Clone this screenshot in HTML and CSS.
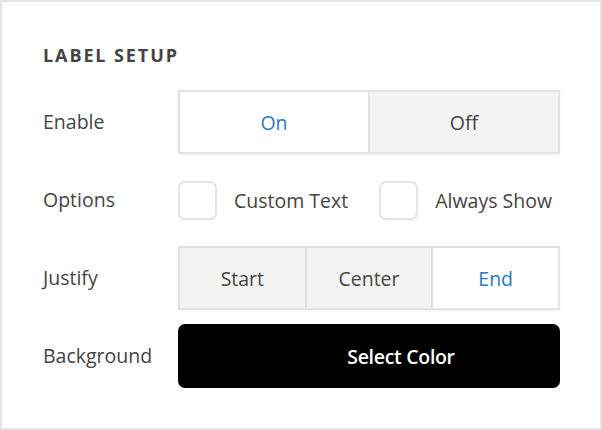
FILE: index.html
```html
<!DOCTYPE html>
<html>
<head>
<meta charset="utf-8">
<link rel="stylesheet" href="styles.css">
</head>
<body>
<div class="panel">
  <h2 class="title">LABEL SETUP</h2>
  <div class="form">
    <div class="label">Enable</div>
    <div class="seg seg-2">
      <div class="seg-item active">On</div>
      <div class="seg-item">Off</div>
    </div>

    <div class="label">Options</div>
    <div class="options">
      <label class="check"><span class="box"></span><span class="check-text">Custom Text</span></label>
      <label class="check"><span class="box"></span><span class="check-text">Always Show</span></label>
    </div>

    <div class="label">Justify</div>
    <div class="seg seg-3">
      <div class="seg-item">Start</div>
      <div class="seg-item">Center</div>
      <div class="seg-item active">End</div>
    </div>

    <div class="label">Background</div>
    <div class="color-btn">Select Color</div>
  </div>
</div>
</body>
</html>
```

FILE: styles.css
```css
html, body {
  margin: 0;
  padding: 0;
  background: #ffffff;
}

.panel {
  box-sizing: border-box;
  width: 602px;
  height: 430px;
  border: 2px solid #e4e4e4;
  padding: 41px 40px 0 41px;
  font-family: "Open Sans", "Noto Sans", sans-serif;
  color: #444444;
}

.title {
  margin: 0;
  font-size: 18px;
  line-height: 24px;
  font-weight: 700;
  letter-spacing: 1.9px;
  color: #444444;
}

.form {
  margin-top: 23px;
  display: grid;
  grid-template-columns: 135px 1fr;
  grid-auto-rows: 64px;
  row-gap: 14px;
  align-items: center;
}

.label {
  font-size: 19.5px;
  line-height: 26px;
}

.seg {
  box-sizing: border-box;
  height: 64px;
  border: 2px solid #e2e2e2;
  display: flex;
  box-shadow: 0 1px 3px rgba(0, 0, 0, 0.06), inset 0 0 3px rgba(0, 0, 0, 0.04);
}

.seg-item {
  flex: 1;
  display: flex;
  align-items: center;
  justify-content: center;
  background: #f3f3f3;
  font-size: 19.5px;
  color: #444444;
  border-left: 2px solid #e2e2e2;
}

.seg-item:first-child {
  border-left: none;
}

.seg-item.active {
  background: #ffffff;
  color: #2b7bb9;
}

.options {
  display: flex;
  align-items: center;
  gap: 31px;
}

.check {
  display: flex;
  align-items: center;
  gap: 17px;
}

.box {
  box-sizing: border-box;
  width: 39px;
  height: 39px;
  border: 2px solid #e4e4e4;
  border-radius: 7px;
  background: #ffffff;
  box-shadow: 0 1px 2px rgba(0, 0, 0, 0.04);
}

.check-text {
  font-size: 19.5px;
}

.color-btn {
  box-sizing: border-box;
  height: 64px;
  border-radius: 7px;
  background: #000000;
  color: #ffffff;
  display: flex;
  align-items: center;
  justify-content: center;
  padding-left: 64px;
  font-size: 19.5px;
  font-weight: 600;
  letter-spacing: -0.3px;
}
```
